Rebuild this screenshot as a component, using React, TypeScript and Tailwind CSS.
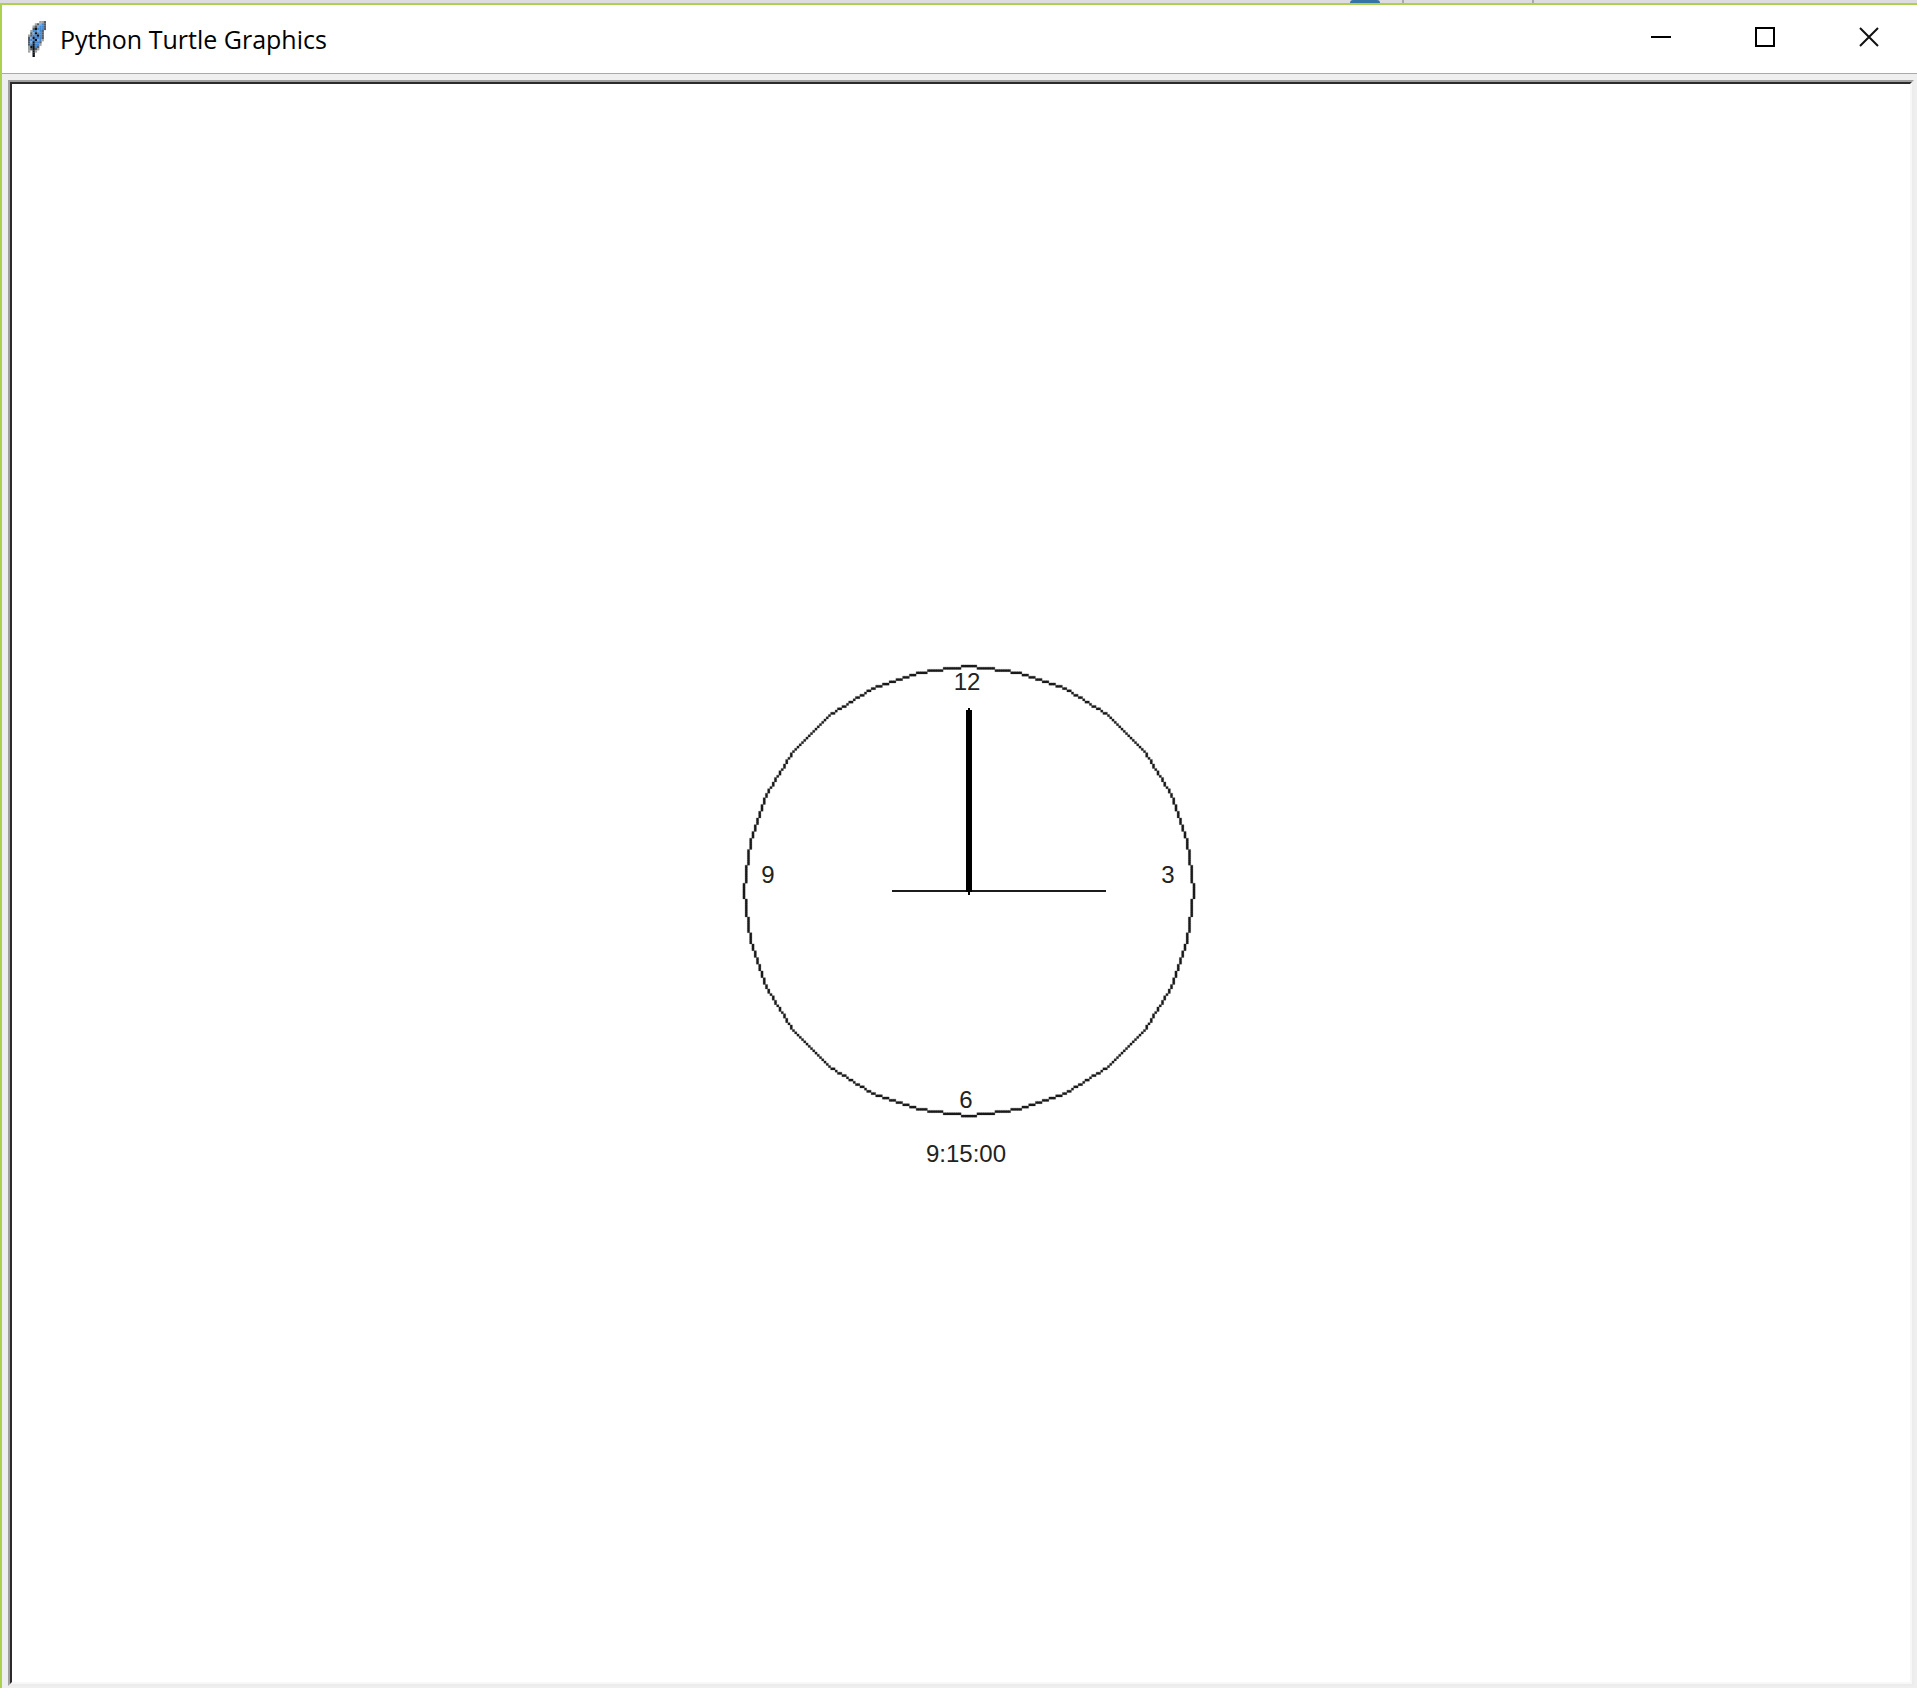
import React from "react";

const UNIT = 2.25;
const CENTER = { x: 230, y: 286 };
const RADIUS = 100;
const SEGMENTS = 28;

type Cell = [number, number];

/** Cells of a one-unit-wide raster line between two grid points. */
function rasterLine([x0, y0]: Cell, [x1, y1]: Cell): Cell[] {
  const steps = Math.max(Math.abs(x1 - x0), Math.abs(y1 - y0));
  return Array.from({ length: steps }, (_, i): Cell => [
    Math.round(x0 + ((x1 - x0) * i) / steps),
    Math.round(y0 + ((y1 - y0) * i) / steps),
  ]);
}

function cellsToPath(cells: Cell[]): string {
  const size = UNIT;
  return cells
    .map(([x, y]) => {
      const left = CENTER.x + (x - 0.5) * size;
      const top = CENTER.y + (y - 0.5) * size;
      return `M${left} ${top}h${size}v${size}h${-size}z`;
    })
    .join("");
}

function dialPath(): string {
  // One quadrant is traced and mirrored so that the dial is symmetrical.
  const quadrant: Cell[] = [];
  const vertex = (i: number): Cell => {
    const a = (i * 2 * Math.PI) / SEGMENTS;
    return [Math.round(Math.sin(a) * RADIUS), Math.round(Math.cos(a) * RADIUS)];
  };
  for (let i = 0; i < SEGMENTS / 4; i++) {
    quadrant.push(...rasterLine(vertex(i), vertex(i + 1)));
  }
  quadrant.push([RADIUS, 0]);
  const all = new Map<string, Cell>();
  for (const [x, y] of quadrant) {
    for (const sx of [1, -1]) {
      for (const sy of [1, -1]) all.set(`${x * sx || 0},${y * sy || 0}`, [x * sx, y * sy]);
    }
  }
  return cellsToPath([...all.values()]);
}

const labels = [
  { text: "12", x: 228, y: 85 },
  { text: "9", x: 29, y: 278 },
  { text: "3", x: 429, y: 278 },
  { text: "6", x: 227, y: 503 },
  { text: "9:15:00", x: 227, y: 557 },
];

function Clock() {
  return (
    <svg
      width="460"
      height="564"
      viewBox="0 0 460 564"
      role="img"
      aria-label="Clock showing 9:15:00"
      className="shrink-0"
    >
      <path d={dialPath()} fill="#1c1c1c" stroke="#1c1c1c" strokeOpacity="0.25" strokeWidth="1" />
      <rect x="153" y="285" width="214" height="2" fill="#1c1c1c" />
      <path d="M227 105h2v-2h2v2h2v182h-2v3h-2v-3h-2z" fill="#000" />
      {labels.map((l) => (
        <text
          key={l.text}
          x={l.x}
          y={l.y}
          textAnchor="middle"
          className="fill-[#222] font-['Liberation_Sans',Arial,sans-serif] text-[24px]"
        >
          {l.text}
        </text>
      ))}
    </svg>
  );
}

const FEATHER_ROWS = [
  ".....ggd",
  "...gdlbd",
  "..gdlbbd",
  "..dkbbbd",
  ".gbblbd.",
  ".dlkbbd.",
  "gdbbkbd.",
  "dlkbbbd.",
  "dbbklbg.",
  "dlkbbd..",
  "dbkbbg..",
  "gkkbd...",
  "gdkdg...",
  "g.kg....",
  "..k.....",
  "..k.....",
];

const FEATHER_COLORS: Record<string, string> = {
  g: "#a3a3a3",
  d: "#555c63",
  k: "#0c1016",
  b: "#3f86d2",
  l: "#70aef0",
};

function Feather() {
  return (
    <svg width="18" height="36" viewBox="0 0 8 16" aria-hidden="true">
      {FEATHER_ROWS.flatMap((row, y) =>
        [...row].map((c, x) =>
          c === "." ? null : (
            <rect key={`${x}-${y}`} x={x} y={y} width="1.05" height="1.05" fill={FEATHER_COLORS[c]} />
          ),
        ),
      )}
    </svg>
  );
}

const captionButton = "flex h-full w-24 items-center justify-center pb-1";

export default function App() {
  return (
    <div className="flex min-h-screen flex-col bg-[#efefef]">
      <div className="flex h-[3px] justify-end bg-[#dcdce1]">
        <div className="mr-[22px] h-full w-[30px] rounded-t-[3px] bg-[#3674a5]" />
        <div className="mr-[128px] h-full w-[2px] bg-[#aaaaaa]" />
        <div className="mr-[383px] h-full w-[2px] bg-[#aaaaaa]" />
      </div>
      <div className="flex grow flex-col border-t-2 border-l-2 border-t-[#aed04f] border-l-[#aed04f]">
        <header className="flex h-[69px] items-center border-b border-[#aaaaaa] bg-white">
          <div className="flex grow items-center gap-[14px] pl-[26px]">
            <Feather />
            <h1 className="font-['Open_Sans','Noto_Sans',sans-serif] text-[25px] leading-9 text-black">
              Python Turtle Graphics
            </h1>
          </div>
          <div className="flex h-full gap-2">
            <button type="button" aria-label="Minimize" className={captionButton}>
              <svg width="20" height="20" viewBox="0 0 20 20">
                <path d="M0 10h20" stroke="#000" strokeWidth="2" />
              </svg>
            </button>
            <button type="button" aria-label="Maximize" className={captionButton}>
              <svg width="20" height="20" viewBox="0 0 20 20">
                <path d="M1 1h18v18H1z" fill="none" stroke="#000" strokeWidth="2" />
              </svg>
            </button>
            <button type="button" aria-label="Close" className={captionButton}>
              <svg width="20" height="20" viewBox="0 0 20 20">
                <path d="M1 1l18 18M19 1L1 19" stroke="#111" strokeWidth="2" />
              </svg>
            </button>
          </div>
        </header>
        <div className="flex grow pt-[6px] pr-[3px] pb-[2px] pl-[6px]">
          <div className="flex grow border-2 border-t-[#a0a0a0] border-r-[#ececec] border-b-[#ececec] border-l-[#a0a0a0]">
            <main className="flex grow items-center justify-center border-2 border-t-[#2b2b2b] border-r-[#f7f7f7] border-b-[#f7f7f7] border-l-[#2b2b2b] bg-white pt-2 pl-4">
              <Clock />
            </main>
          </div>
        </div>
      </div>
    </div>
  );
}
